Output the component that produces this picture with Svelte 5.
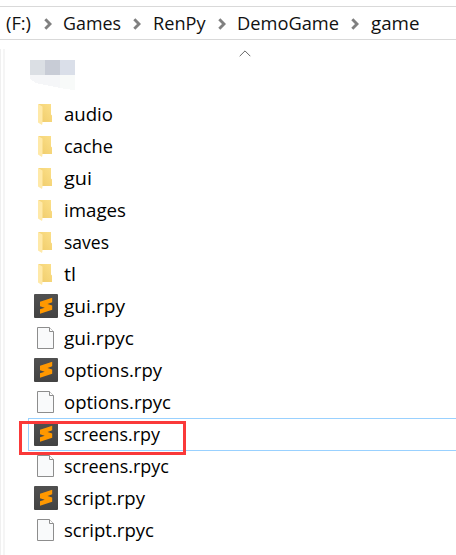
<script>
  const crumbs = [
    { name: '(F:)', width: 26 },
    { name: 'Games', width: 59 },
    { name: 'RenPy', width: 53.5 },
    { name: 'DemoGame', width: 103 },
    { name: 'game', width: 49.5 }
  ];
  const files = [
    { name: 'audio', kind: 'folder', width: 50 },
    { name: 'cache', kind: 'folder', width: 50 },
    { name: 'gui', kind: 'folder', width: 29 },
    { name: 'images', kind: 'folder', width: 63 },
    { name: 'saves', kind: 'folder', width: 46 },
    { name: 'tl', kind: 'folder', width: 13 },
    { name: 'gui.rpy', kind: 'source', width: 62 },
    { name: 'gui.rpyc', kind: 'file', width: 71 },
    { name: 'options.rpy', kind: 'source', width: 99 },
    { name: 'options.rpyc', kind: 'file', width: 108 },
    { name: 'screens.rpy', kind: 'source', width: 97, selected: true },
    { name: 'screens.rpyc', kind: 'file', width: 106 },
    { name: 'script.rpy', kind: 'source', width: 82 },
    { name: 'script.rpyc', kind: 'file', width: 91 }
  ];
</script>

{#snippet label(name, width)}
  <svg class="label" {width} height="28" style:width="{width}px">
    <text x="0" y="21" textLength={width - 1} lengthAdjust="spacingAndGlyphs">{name}</text>
  </svg>
{/snippet}

<div class="window">
  <nav>
    {#each crumbs as c, i}
      {#if i}
        <svg class="chevron" width="8" height="12" viewBox="0 0 8 12"><path d="M1.3 1.3 6 6 1.3 10.7" /></svg>
      {/if}
      {@render label(c.name, c.width)}
    {/each}
  </nav>
  <div class="body">
    <div class="gutter"></div>
    <main>
      <div class="head">
        <svg class="sort" width="12" height="7" viewBox="0 0 12 7"><path d="M.7 6.2 6 .9l5.3 5.3" /></svg>
        <svg class="mosaic" width="45" height="30" viewBox="0 0 45 30" shape-rendering="crispEdges">
          <path fill="#dbdfe4" d="M0 0h15v15H0z" />
          <path fill="#c8ccd6" d="M15 0h15v15H15z" />
          <path fill="#dadfe9" d="M30 0h15v15H30z" />
          <path fill="#f5f6f8" d="M0 15h30v13l-15-3-9-2-6-4z" />
          <path fill="#f8faf9" d="M30 15h15v15l-10-1-5-1z" />
        </svg>
      </div>
      <ul>
        {#each files as f}
          <li class:selected={f.selected}>
            {#if f.kind === 'folder'}
              <svg class="icon" viewBox="0 0 24 24">
                <defs>
                  <linearGradient id="back" y1="1" y2="0"><stop stop-color="#efcb69" /><stop offset="1" stop-color="#fce08a" /></linearGradient>
                </defs>
                <path fill="url(#back)" d="M4.300 2H17v10.500l1 1V20H8z" />
                <path fill="#ffe9a8" d="M4 2l4.500 2.500V21L8 23l-4-2.500z" />
              </svg>
            {:else if f.kind === 'source'}
              <svg class="icon" viewBox="0 0 24 24">
                <defs>
                  <linearGradient id="tile" x2="0" y2="1"><stop stop-color="#505050" /><stop offset="1" stop-color="#434343" /></linearGradient>
                </defs>
                <rect width="24" height="24" rx="1" fill="url(#tile)" />
                <path fill="#ff9800" d="M18.200 3.800v4.500L13.500 10l4.700 1.500v4.300L6 19.700v-4.500l4.700-1.500L6 12.200V7.700z" />
              </svg>
            {:else}
              <svg class="icon" viewBox="0 0 24 24">
                <path fill="#f9fafb" stroke="#8d8d8d" d="M3.500 1.500h12l4 4v17h-16z" />
                <path fill="#fff" stroke="#8d8d8d" d="M15.500 1.500v4h4" />
              </svg>
            {/if}
            {@render label(f.name, f.width)}
            {#if f.selected}<span class="mark"></span>{/if}
          </li>
        {/each}
      </ul>
    </main>
  </div>
</div>

<style>
  .window {
    width: 456px;
    height: 555px;
    overflow: hidden;
    background: #fff;
    padding-top: 6px;
    box-sizing: border-box;
    font-family: "Open Sans", "Noto Sans", sans-serif;
    font-size: 18.7px;
  }
  nav {
    height: 32px;
    border: solid #d9d9d9;
    border-width: 1px 0;
    display: flex;
    align-items: center;
    padding-left: 6px;
  }
  .label {
    display: block;
    flex: none;
    overflow: visible;
    fill: #000;
  }
  nav .label {
    fill: #111;
  }
  .chevron {
    flex: none;
    margin: 1px 11.3px 0 11.5px;
    fill: none;
    stroke: #808080;
    stroke-width: 2.9;
  }
  .body {
    display: flex;
    height: 515px;
  }
  .gutter {
    flex: none;
    width: 2px;
    margin-top: 9px;
    border-left: 1px solid #f0f0f0;
    border-right: 2px solid #f5f5f5;
  }
  main {
    flex: 1;
    padding-left: 23px;
  }
  .head {
    height: 58px;
    display: flex;
    flex-direction: column;
  }
  .sort {
    margin: 10px 0 0 211px;
    fill: none;
    stroke: #666;
    stroke-width: 1;
  }
  .mosaic {
    margin: 3px 0 0 2px;
  }
  ul {
    list-style: none;
    margin: 0;
    padding: 0;
  }
  li {
    position: relative;
    height: 32px;
    padding-left: 6px;
    display: flex;
    align-items: center;
    gap: 6px;
  }
  .icon {
    flex: none;
    width: 24px;
    height: 24px;
  }
  .selected {
    box-sizing: border-box;
    height: 33px;
    margin-bottom: -1px;
    padding-left: 5px;
    padding-bottom: 1px;
    border: 1px solid #99d1ff;
    border-right: 0;
  }
  .mark {
    position: absolute;
    left: -10px;
    top: 2px;
    width: 161px;
    height: 28px;
    border: 3px solid #fa3939;
  }
</style>
